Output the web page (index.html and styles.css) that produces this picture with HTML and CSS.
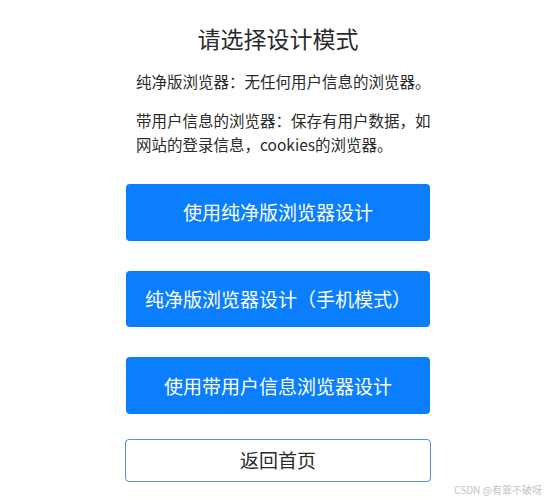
FILE: index.html
```html
<!DOCTYPE html>
<html lang="zh-CN">
<head>
<meta charset="utf-8">
<title>请选择设计模式</title>
<link rel="stylesheet" href="styles.css">
</head>
<body>
<div class="page">
  <h1 class="title">请选择设计模式</h1>
  <p class="desc first">纯净版浏览器：无任何用户信息的浏览器。</p>
  <p class="desc second">带用户信息的浏览器：保存有用户数据，如网站的登录信息，cookies的浏览器。</p>
  <div class="actions">
    <button class="btn primary">使用纯净版浏览器设计</button>
    <button class="btn primary">纯净版浏览器设计（手机模式）</button>
    <button class="btn primary">使用带用户信息浏览器设计</button>
    <button class="btn outline">返回首页</button>
  </div>
</div>
<div class="watermark">CSDN @有霏不破呀</div>
</body>
</html>
```

FILE: styles.css
```css
html, body {
  margin: 0;
  padding: 0;
  background: #ffffff;
}
body {
  width: 547px;
  height: 500px;
  position: relative;
  overflow: hidden;
  font-family: "Noto Sans CJK SC", "Noto Sans", sans-serif;
  color: #2b2b2b;
}
.page {
  width: 304px;
  margin-left: 126px;
  padding-top: 23px;
  display: flex;
  flex-direction: column;
}
.title {
  margin: 0;
  font-size: 23px;
  font-weight: 400;
  line-height: 30px;
  text-align: center;
  color: #2b2b2b;
}
.desc {
  margin: 0;
  padding-left: 10px;
  width: 300px;
  font-size: 15.5px;
  line-height: 24px;
  color: #2b2b2b;
}
.desc.first {
  margin-top: 16px;
}
.desc.second {
  margin-top: 15px;
}
.actions {
  margin-top: 28px;
  display: flex;
  flex-direction: column;
}
.btn {
  font-family: "Noto Sans CJK SC", "Noto Sans", sans-serif;
  font-size: 19px;
  line-height: 24px;
  width: 304px;
  border-radius: 4px;
  padding: 0;
  cursor: pointer;
}
.btn.primary {
  height: 56.7px;
  background: #0b7efe;
  color: #ffffff;
  border: none;
  margin-bottom: 30px;
}
.btn.primary:nth-child(3) {
  margin-bottom: 25px;
}
.btn.outline {
  height: 42.5px;
  width: 306px;
  margin-left: -1px;
  background: #ffffff;
  color: #2b2b2b;
  border: 1px solid #4a90dc;
}
.watermark {
  position: absolute;
  right: 5px;
  bottom: 4px;
  font-size: 10px;
  line-height: 12px;
  color: #c4c4c4;
}
```
